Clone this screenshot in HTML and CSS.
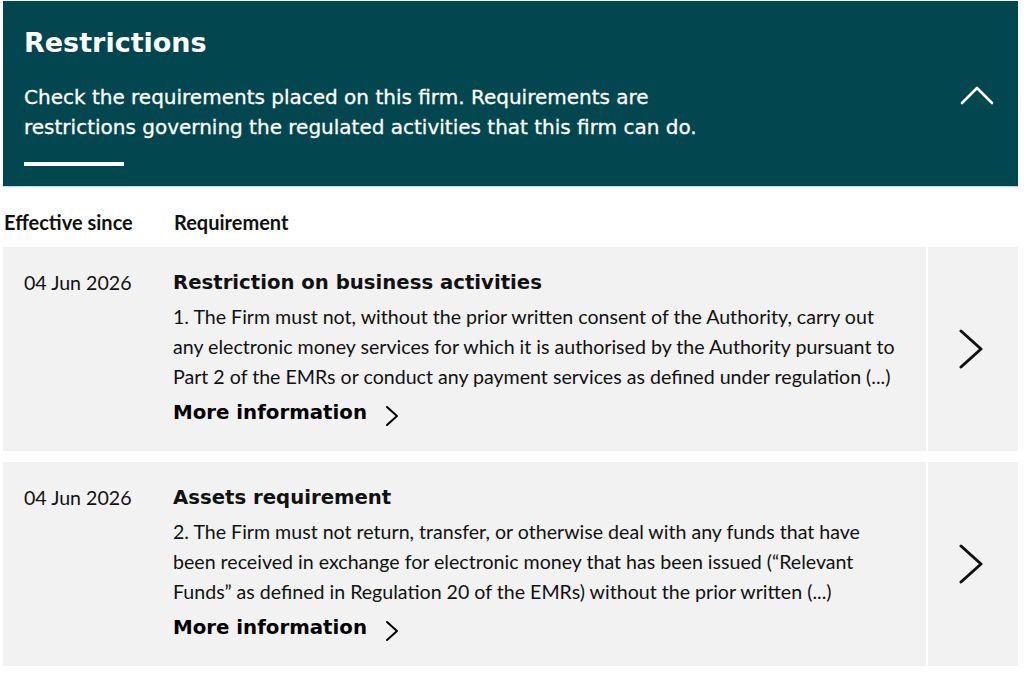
FILE: index.html
```html
<!DOCTYPE html>
<html lang="en">
<head>
<meta charset="utf-8">
<title>Restrictions</title>
<link rel="stylesheet" href="styles.css">
</head>
<body>
<div class="page">
  <section class="panel">
    <div class="panel-text">
      <h1 class="panel-title">Restrictions</h1>
      <p class="panel-desc">Check the requirements placed on this firm. Requirements are<br>restrictions governing the regulated activities that this firm can do.</p>
      <div class="panel-bar"></div>
    </div>
    <button class="panel-toggle" aria-label="Collapse">
      <svg width="34" height="20" viewBox="0 0 34 20"><path d="M2 18 L17 3 L32 18" fill="none" stroke="#fff" stroke-width="2.6" stroke-linecap="round" stroke-linejoin="round"/></svg>
    </button>
  </section>

  <div class="table-head">
    <div class="col-date">Effective since</div>
    <div class="col-req">Requirement</div>
  </div>

  <div class="rows">
    <div class="row">
      <div class="row-main">
        <div class="row-date">04 Jun 2026</div>
        <div class="row-body">
          <h2 class="row-title">Restriction on business activities</h2>
          <p class="row-text">1. The Firm must not, without the prior written consent of the Authority, carry out any electronic money services for which it is authorised by the Authority pursuant to Part 2 of the EMRs or conduct any payment services as defined under regulation (...)</p>
          <a class="more" href="#">More information
            <svg width="16" height="24" viewBox="0 0 16 24"><path d="M3 3 L13 12 L3 21" fill="none" stroke="#000" stroke-width="2" stroke-linecap="round" stroke-linejoin="round"/></svg>
          </a>
        </div>
      </div>
      <div class="row-arrow">
        <svg width="26" height="40" viewBox="0 0 26 40"><path d="M3 2 L23 20 L3 38" fill="none" stroke="#111" stroke-width="3" stroke-linecap="round" stroke-linejoin="round"/></svg>
      </div>
    </div>

    <div class="row">
      <div class="row-main">
        <div class="row-date">04 Jun 2026</div>
        <div class="row-body">
          <h2 class="row-title">Assets requirement</h2>
          <p class="row-text">2. The Firm must not return, transfer, or otherwise deal with any funds that have been received in exchange for electronic money that has been issued (“Relevant Funds” as defined in Regulation 20 of the EMRs) without the prior written (...)</p>
          <a class="more" href="#">More information
            <svg width="16" height="24" viewBox="0 0 16 24"><path d="M3 3 L13 12 L3 21" fill="none" stroke="#000" stroke-width="2" stroke-linecap="round" stroke-linejoin="round"/></svg>
          </a>
        </div>
      </div>
      <div class="row-arrow">
        <svg width="26" height="40" viewBox="0 0 26 40"><path d="M3 2 L23 20 L3 38" fill="none" stroke="#111" stroke-width="3" stroke-linecap="round" stroke-linejoin="round"/></svg>
      </div>
    </div>
  </div>
</div>
</body>
</html>
```

FILE: styles.css
```css
html, body {
  margin: 0;
  padding: 0;
  background: #fff;
}
body {
  font-family: Lato, "Liberation Sans", sans-serif;
  color: #111;
}
.page {
  margin: 1px 6px 0 3px;
}
.panel {
  background: #02474f;
  border-bottom: 1px solid #a9dede;
  display: flex;
  align-items: center;
  justify-content: space-between;
  padding: 0 24px 0 21px;
  height: 186px;
  box-sizing: border-box;
}
.panel-text {
  display: flex;
  flex-direction: column;
  align-self: flex-start;
}
.panel-title {
  margin: 25px 0 0 0;
  font-family: "DejaVu Sans", sans-serif;
  font-weight: 700;
  font-size: 27px;
  line-height: 34px;
  color: #fff;
}
.panel-desc {
  margin: 22px 0 0 0;
  font-family: "DejaVu Sans", sans-serif;
  font-size: 20px;
  line-height: 30px;
  color: #fff;
  -webkit-text-stroke: 0.3px #fff;
}
.panel-bar {
  width: 100px;
  height: 4px;
  background: #fff;
  margin-top: 20px;
}
.panel-toggle {
  background: none;
  border: 0;
  padding: 0;
  display: flex;
  cursor: pointer;
  position: relative;
  top: 1px;
}
.table-head {
  display: flex;
  height: 60px;
  box-sizing: border-box;
  padding-top: 22px;
  font-weight: 700;
  font-size: 20px;
  line-height: 26px;
  color: #111;
}
.col-date {
  width: 170px;
  padding-left: 1px;
}
.rows {
  display: flex;
  flex-direction: column;
  gap: 11px;
}
.row {
  display: flex;
  gap: 2px;
  height: 204px;
}
.row-main {
  flex: 1;
  background: #f2f2f2;
  display: flex;
  padding: 23px 20px 0 21px;
}
.row-date {
  width: 149px;
  flex-shrink: 0;
  font-size: 19.6px;
  line-height: 26px;
}
.row-body {
  flex: 1;
}
.row-title {
  margin: 0;
  font-family: "DejaVu Sans", sans-serif;
  font-weight: 700;
  font-size: 19.7px;
  line-height: 26px;
}
.row-text {
  margin: 6px 0 0 0;
  font-size: 19.6px;
  line-height: 30px;
  max-width: 740px;
}
.more {
  display: inline-flex;
  align-items: center;
  gap: 17px;
  margin-top: 7px;
  color: #000;
  text-decoration: none;
  font-family: "DejaVu Sans", sans-serif;
  font-weight: 700;
  font-size: 19.8px;
  line-height: 28px;
}
.more svg {
  position: relative;
  top: 3px;
}
.row-arrow {
  width: 90px;
  background: #f2f2f2;
  display: flex;
  align-items: center;
  justify-content: center;
}
.row-arrow svg {
  position: relative;
  left: -2px;
}
```
